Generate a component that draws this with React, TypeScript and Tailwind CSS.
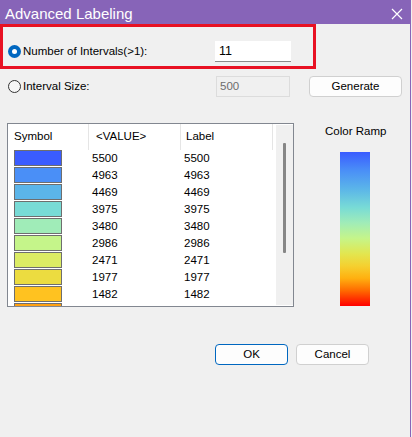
import React from "react";

const rows: { v: string; c: string }[] = [
  { v: "5500", c: "#3a5cff" },
  { v: "4963", c: "#4a8ff7" },
  { v: "4469", c: "#5bb5e9" },
  { v: "3975", c: "#78dbd6" },
  { v: "3480", c: "#a0ecb8" },
  { v: "2986", c: "#c5f58a" },
  { v: "2471", c: "#dcec64" },
  { v: "1977", c: "#ecdc40" },
  { v: "1482", c: "#ffc220" },
  { v: "", c: "#ffa012" },
];

export default function App() {
  return (
    <div
      className="w-[412px] h-[437px] bg-[#f0f0f0] flex flex-col overflow-hidden text-[11.5px] text-black"
      style={{ fontFamily: '"Liberation Sans", Arial, sans-serif' }}
    >
      <div className="h-[24px] w-[411px] bg-[#8764b8] flex items-center justify-between pl-[5px] pr-[8px] text-white shrink-0">
        <span className="text-[15px] leading-none mt-[2px]">Advanced Labeling</span>
        <svg width="12" height="12" viewBox="0 0 12 12" className="mt-[3px]">
          <path d="M1 1 L11 11 M11 1 L1 11" stroke="white" strokeWidth="1.2" />
        </svg>
      </div>
      <div className="flex-1 w-[411px] border-r border-[#8764b8] flex flex-col">
        {/* highlighted row */}
        <div className="w-[316px] h-[45px] border-[3px] border-[#e81123] pt-[14px] pl-[5px]">
          <div className="flex items-center h-[21px]">
            <div className="w-[13px] h-[13px] rounded-full bg-[#0067c0] flex items-center justify-center">
              <div className="w-[5px] h-[5px] rounded-full bg-white" />
            </div>
            <span className="ml-[2px] w-[192px]">Number of Intervals(&gt;1):</span>
            <div className="w-[76px] h-[21px] bg-white border-b border-[#8a8a8a] flex items-center pl-[4px] text-[12.5px]">
              11
            </div>
          </div>
        </div>
        {/* row 2 */}
        <div className="flex items-center h-[21px] mt-[7px] pl-[8px]">
          <div className="w-[13px] h-[13px] rounded-full border border-[#333] bg-[#f7f7f7]" />
          <span className="ml-[2px] w-[193px]">Interval Size:</span>
          <div className="w-[74px] h-[21px] bg-[#f0f0f0] border border-[#dcdcdc] flex items-center pl-[3px] text-[#6d6d6d]">
            500
          </div>
          <div className="ml-[19px] w-[93px] h-[21px] bg-[#fdfdfd] border border-[#d0d0d0] rounded-[4px] flex items-center justify-center">
            Generate
          </div>
        </div>
        {/* list + ramp */}
        <div className="flex mt-[26px]">
          <div className="ml-[7px] w-[287px] h-[184px] border border-[#828790] bg-white flex overflow-hidden">
            <div className="w-[268px] flex flex-col">
              <div className="h-[26px] flex items-center shrink-0">
                <div className="w-[81px] h-full border-r border-[#e5e5e5] flex items-center pl-[6px]">Symbol</div>
                <div className="w-[92px] h-full border-r border-[#e5e5e5] flex items-center pl-[7px]">&lt;VALUE&gt;</div>
                <div className="w-[92px] h-full border-r border-[#e5e5e5] flex items-center pl-[5px]">Label</div>
              </div>
              <div className="flex flex-col">
                {rows.map((r, i) => (
                  <div key={i} className="h-[17px] flex items-start shrink-0">
                    <div className="ml-[6px] w-[48px] h-[16px] border border-[#6e6e6e]" style={{ backgroundColor: r.c }} />
                    <span className="ml-[30px] w-[92px] leading-[16px]">{r.v}</span>
                    <span className="leading-[16px]">{r.v}</span>
                  </div>
                ))}
              </div>
            </div>
            <div className="w-[17px] ml-auto bg-[#f0f0f0] mt-[1px] mb-[1px] relative">
              <div className="absolute left-[7px] top-[18px] w-[3px] h-[110px] bg-[#868686] rounded-[1px]" />
            </div>
          </div>
          <div className="flex flex-col">
            <span className="ml-[31px] mt-[1px] whitespace-nowrap leading-[14px]">Color Ramp</span>
            <div
              className="ml-[46px] mt-[14px] w-[30px] h-[154px]"
              style={{
                background:
                  "linear-gradient(to bottom, #3a5cff 0%, #4a8ff7 12%, #5bb5e9 24%, #78dbd6 36%, #a0ecb8 46%, #c5f58a 56%, #e2e650 66%, #f5d030 74%, #ffb010 82%, #ff6a00 90%, #ff0000 100%)",
              }}
            />
          </div>
        </div>
        {/* buttons */}
        <div className="flex mt-[37px] ml-[215px]">
          <div className="w-[73px] h-[21px] bg-[#fdfdfd] border border-[#0067c0] rounded-[4px] flex items-center justify-center">
            OK
          </div>
          <div className="ml-[8px] w-[73px] h-[21px] bg-[#fdfdfd] border border-[#d0d0d0] rounded-[4px] flex items-center justify-center">
            Cancel
          </div>
        </div>
      </div>
    </div>
  );
}
